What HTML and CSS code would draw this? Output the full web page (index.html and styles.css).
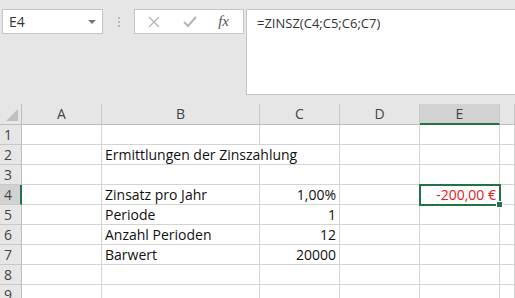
FILE: index.html
```html
<!DOCTYPE html>
<html lang="de">
<head>
    <meta charset="UTF-8">
    <title>ZINSZ</title>
    <link rel="stylesheet" href="styles.css">
</head>
<body>
    <div class="toolbar">
        <div class="name-box">
            <span>E4</span>
            <span class="caret"></span>
        </div>
        <div class="grip"><i></i><i></i><i></i></div>
        <div class="fx-box">
            <svg class="icon" width="14" height="14" viewBox="0 0 14 14">
                <path d="M2 2 L12 12 M12 2 L2 12" stroke="#b4b4b4" stroke-width="1.3" fill="none"/>
            </svg>
            <svg class="icon" width="16" height="14" viewBox="0 0 16 14">
                <path d="M2 7 L6 11 L14 2" stroke="#b4b4b4" stroke-width="2" fill="none"/>
            </svg>
            <span class="fx">fx</span>
        </div>
        <div class="formula">=ZINSZ(C4;C5;C6;C7)</div>
    </div>

    <div class="sheet">
        <div class="corner"><span class="tri"></span></div>
        <div class="col-head">A</div>
        <div class="col-head">B</div>
        <div class="col-head">C</div>
        <div class="col-head">D</div>
        <div class="col-head active">E</div>
        <div class="col-head"></div>

        <div class="row-head">1</div>
        <div class="cell"></div><div class="cell"></div><div class="cell"></div><div class="cell"></div><div class="cell"></div><div class="cell"></div>

        <div class="row-head">2</div>
        <div class="cell"></div><div class="cell wide">Ermittlungen der Zinszahlung</div><div class="cell"></div><div class="cell"></div><div class="cell"></div>

        <div class="row-head">3</div>
        <div class="cell"></div><div class="cell"></div><div class="cell"></div><div class="cell"></div><div class="cell"></div><div class="cell"></div>

        <div class="row-head active">4</div>
        <div class="cell"></div><div class="cell">Zinsatz pro Jahr</div><div class="cell num">1,00%</div><div class="cell"></div>
        <div class="cell num neg selected">-200,00 €<span class="handle"></span></div><div class="cell"></div>

        <div class="row-head">5</div>
        <div class="cell"></div><div class="cell">Periode</div><div class="cell num">1</div><div class="cell"></div><div class="cell"></div><div class="cell"></div>

        <div class="row-head">6</div>
        <div class="cell"></div><div class="cell">Anzahl Perioden</div><div class="cell num">12</div><div class="cell"></div><div class="cell"></div><div class="cell"></div>

        <div class="row-head">7</div>
        <div class="cell"></div><div class="cell">Barwert</div><div class="cell num">20000</div><div class="cell"></div><div class="cell"></div><div class="cell"></div>

        <div class="row-head">8</div>
        <div class="cell"></div><div class="cell"></div><div class="cell"></div><div class="cell"></div><div class="cell"></div><div class="cell"></div>

        <div class="row-head">9</div>
        <div class="cell"></div><div class="cell"></div><div class="cell"></div><div class="cell"></div><div class="cell"></div><div class="cell"></div>
    </div>
</body>
</html>
```

FILE: styles.css
```css
body {
    margin: 0;
    width: 515px;
    height: 298px;
    overflow: hidden;
    background: #e6e6e6;
    font-family: 'Open Sans', 'Liberation Sans', sans-serif;
    color: #222;
}
.toolbar {
    display: flex;
    align-items: flex-start;
    height: 104px;
    padding-top: 9px;
    padding-left: 2px;
    box-sizing: border-box;
}
.name-box {
    width: 101px;
    height: 25px;
    box-sizing: border-box;
    background: #fff;
    border: 1px solid #c6c6c6;
    display: flex;
    align-items: center;
    justify-content: space-between;
    padding: 0 6px 0 6px;
    font-size: 14px;
    color: #333;
}
.caret {
    width: 0;
    height: 0;
    border-left: 4px solid transparent;
    border-right: 4px solid transparent;
    border-top: 4px solid #777;
}
.grip {
    width: 31px;
    height: 25px;
    display: flex;
    flex-direction: column;
    align-items: center;
    justify-content: center;
    gap: 2px;
}
.grip i {
    width: 2px;
    height: 2px;
    background: #b8b8b8;
}
.fx-box {
    width: 110px;
    height: 25px;
    box-sizing: border-box;
    background: #fff;
    border: 1px solid #c6c6c6;
    display: flex;
    align-items: center;
    justify-content: space-between;
    padding: 0 14px 0 12px;
}
.fx {
    font-family: 'Liberation Serif', serif;
    font-style: italic;
    font-size: 15px;
    color: #555;
}
.formula {
    margin-left: 2px;
    flex: 1;
    height: 86px;
    box-sizing: border-box;
    background: #fff;
    border: 1px solid #c6c6c6;
    border-right: none;
    padding: 4px 0 0 10px;
    font-size: 13px;
    color: #333;
}
.sheet {
    display: grid;
    grid-template-columns: 22px 80px 158px 80px 80px 80px 1fr;
    grid-template-rows: 21px repeat(9, 20px);
    font-size: 14px;
}
.corner,
.col-head,
.row-head,
.cell {
    box-sizing: border-box;
    border-right: 1px solid #d4d4d4;
    border-bottom: 1px solid #d4d4d4;
    white-space: nowrap;
}
.corner {
    position: relative;
    border-color: #bdbdbd;
}
.tri {
    position: absolute;
    right: 3px;
    bottom: 3px;
    width: 0;
    height: 0;
    border-left: 12px solid transparent;
    border-bottom: 12px solid #c0c0c0;
}
.col-head {
    text-align: center;
    line-height: 20px;
    color: #444;
    border-right-color: #c8c8c8;
    border-bottom-color: #bdbdbd;
}
.col-head.active {
    background: #d2d2d2;
    border-bottom: 2px solid #217346;
}
.row-head {
    padding-left: 4px;
    line-height: 19px;
    color: #444;
    border-right-color: #bdbdbd;
    border-bottom-color: #c8c8c8;
}
.row-head.active {
    background: #d2d2d2;
    border-right: 2px solid #217346;
}
.cell {
    background: #fff;
    line-height: 19px;
    padding: 0 3px;
    color: #111;
}
.wide {
    grid-column: span 2;
}
.num {
    text-align: right;
}
.neg {
    color: #e0201c;
}
.selected {
    position: relative;
    outline: 2px solid #217346;
    outline-offset: -1px;
    z-index: 1;
}
.handle {
    position: absolute;
    right: -4px;
    bottom: -4px;
    width: 5px;
    height: 5px;
    background: #217346;
    border: 1px solid #fff;
}
```
